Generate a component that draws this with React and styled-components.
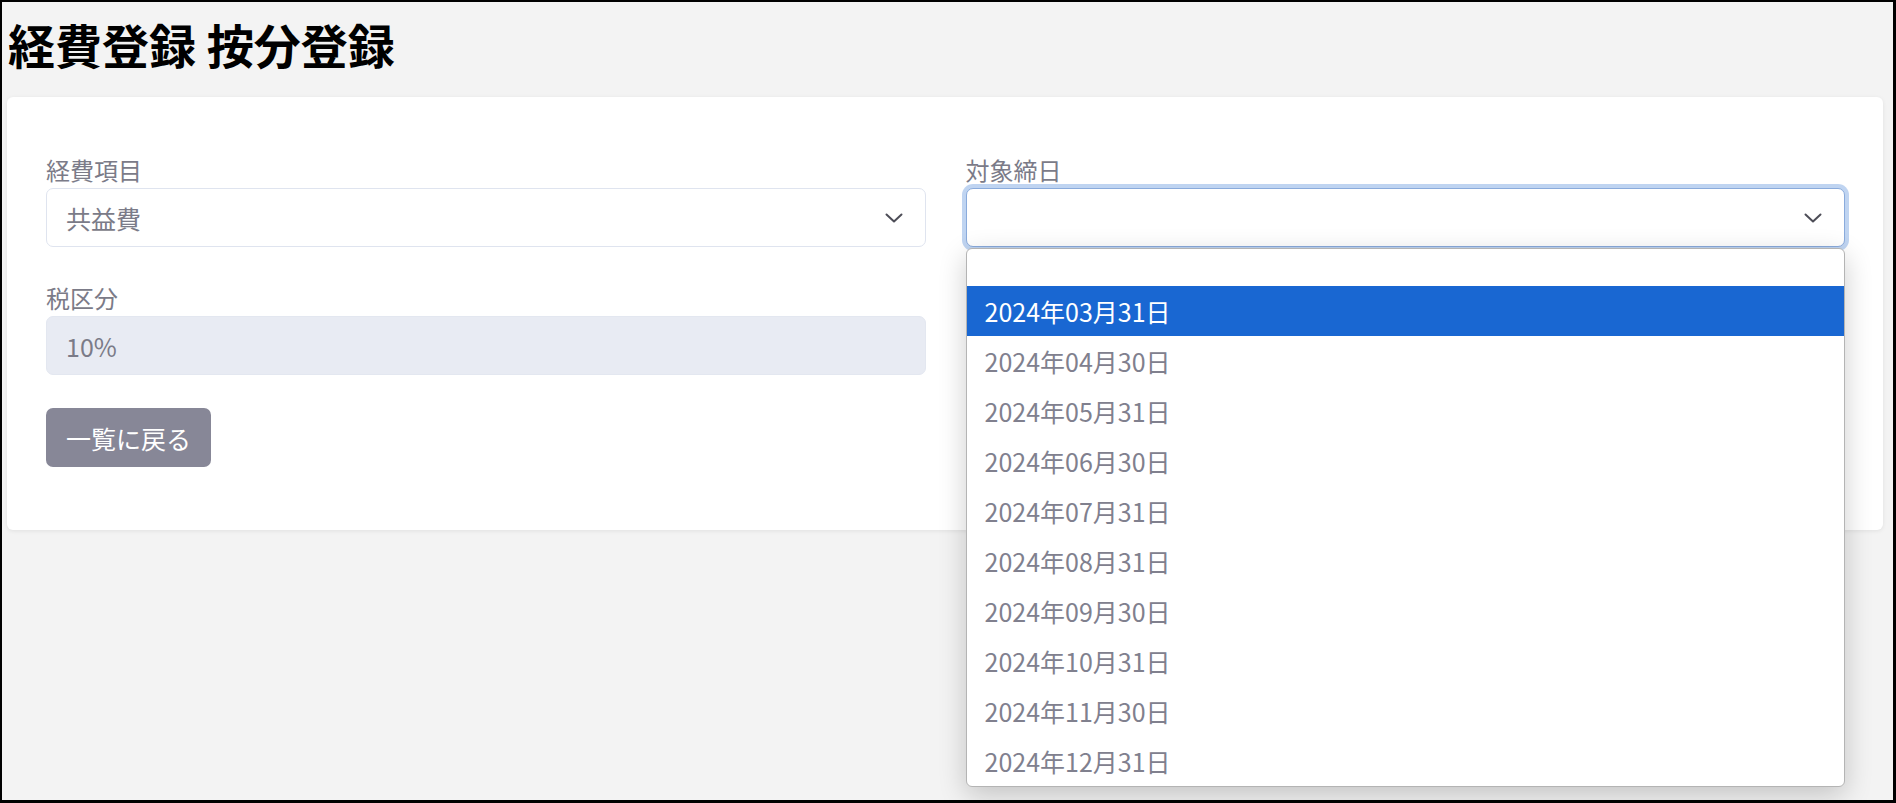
import React from "react";
import styled, { createGlobalStyle } from "styled-components";

const GlobalStyle = createGlobalStyle`
  html, body {
    margin: 0;
    padding: 0;
    background: #f3f3f3;
  }
  * { box-sizing: border-box; }
  body {
    font-family: "Noto Sans CJK JP", "Noto Sans", sans-serif;
  }
`;

const Frame = styled.div`
  width: 1896px;
  height: 803px;
  border-style: solid;
  border-color: #000;
  border-width: 2px 3px 3px 2px;
  background: #f3f3f3;
  padding: 0 10px 0 5px;
  overflow: hidden;
`;

const Title = styled.h1`
  margin: 19px 0 0 1px;
  font-size: 47px;
  line-height: 46px;
  font-weight: 700;
  color: #000;
  letter-spacing: 0;
`;

const Card = styled.section`
  margin-top: 30px;
  background: #fff;
  border-radius: 6px;
  box-shadow: 0 1px 4px rgba(0, 0, 0, 0.08);
  padding: 55px 38px 63px 39px;
`;

const FormGrid = styled.div`
  display: grid;
  grid-template-columns: 1fr 1fr;
  column-gap: 40px;
  row-gap: 33px;
`;

const Field = styled.div`
  position: relative;
  display: flex;
  flex-direction: column;
`;

const Label = styled.label`
  font-size: 24px;
  line-height: 36px;
  color: #7b7b88;
`;

const SelectBox = styled.div`
  height: 59px;
  display: flex;
  align-items: center;
  justify-content: space-between;
  padding: 0 22px 0 19px;
  background: ${(p) => (p.$disabled ? "#e8ebf3" : "#fff")};
  border: 1px solid ${(p) => (p.$focused ? "#8aabdc" : p.$disabled ? "#e3e7f0" : "#dfe4ef")};
  border-radius: 7px;
  box-shadow: ${(p) => (p.$focused ? "0 0 0 4px rgba(170, 198, 236, 0.75)" : "none")};
  font-size: 25px;
  color: #7b7b88;
`;

const Chevron = styled.svg`
  width: 18px;
  height: 10px;
  flex: none;
`;

const Button = styled.button`
  justify-self: start;
  height: 59px;
  padding: 0 20px;
  border: none;
  border-radius: 7px;
  background: #878797;
  color: #fff;
  font-family: inherit;
  font-size: 25px;
  cursor: pointer;
`;

const Dropdown = styled.ul`
  position: absolute;
  top: calc(100% + 1px);
  left: 0;
  right: 0;
  margin: 0;
  padding: 0;
  list-style: none;
  background: #fff;
  border: 1px solid #b4b4b4;
  border-radius: 6px;
  box-shadow: 0 8px 28px rgba(0, 0, 0, 0.2);
  overflow: hidden;
  z-index: 10;
`;

const Option = styled.li`
  height: ${(p) => (p.$empty ? "37px" : "50px")};
  display: flex;
  align-items: center;
  padding: 0 18px;
  font-size: 25px;
  color: ${(p) => (p.$active ? "#fff" : "#80808e")};
  background: ${(p) => (p.$active ? "#1967d2" : "transparent")};
`;

const ChevronIcon = () => (
  <Chevron viewBox="0 0 18 10" fill="none">
    <path d="M1.5 1.5 L9 8.5 L16.5 1.5" stroke="#4d4d57" strokeWidth="2" strokeLinecap="round" strokeLinejoin="round" />
  </Chevron>
);

const dates = [
  "2024年03月31日",
  "2024年04月30日",
  "2024年05月31日",
  "2024年06月30日",
  "2024年07月31日",
  "2024年08月31日",
  "2024年09月30日",
  "2024年10月31日",
  "2024年11月30日",
  "2024年12月31日",
];

export default function App() {
  return (
    <>
      <GlobalStyle />
      <Frame>
        <Title>経費登録 按分登録</Title>
        <Card>
          <FormGrid>
            <Field>
              <Label>経費項目</Label>
              <SelectBox>
                <span>共益費</span>
                <ChevronIcon />
              </SelectBox>
            </Field>
            <Field>
              <Label>対象締日</Label>
              <SelectBox $focused>
                <span></span>
                <ChevronIcon />
              </SelectBox>
              <Dropdown>
                <Option $empty />
                {dates.map((d, i) => (
                  <Option key={d} $active={i === 0}>
                    {d}
                  </Option>
                ))}
              </Dropdown>
            </Field>
            <Field>
              <Label>税区分</Label>
              <SelectBox $disabled>
                <span>10%</span>
              </SelectBox>
            </Field>
            <div />
            <Button>一覧に戻る</Button>
          </FormGrid>
        </Card>
      </Frame>
    </>
  );
}
